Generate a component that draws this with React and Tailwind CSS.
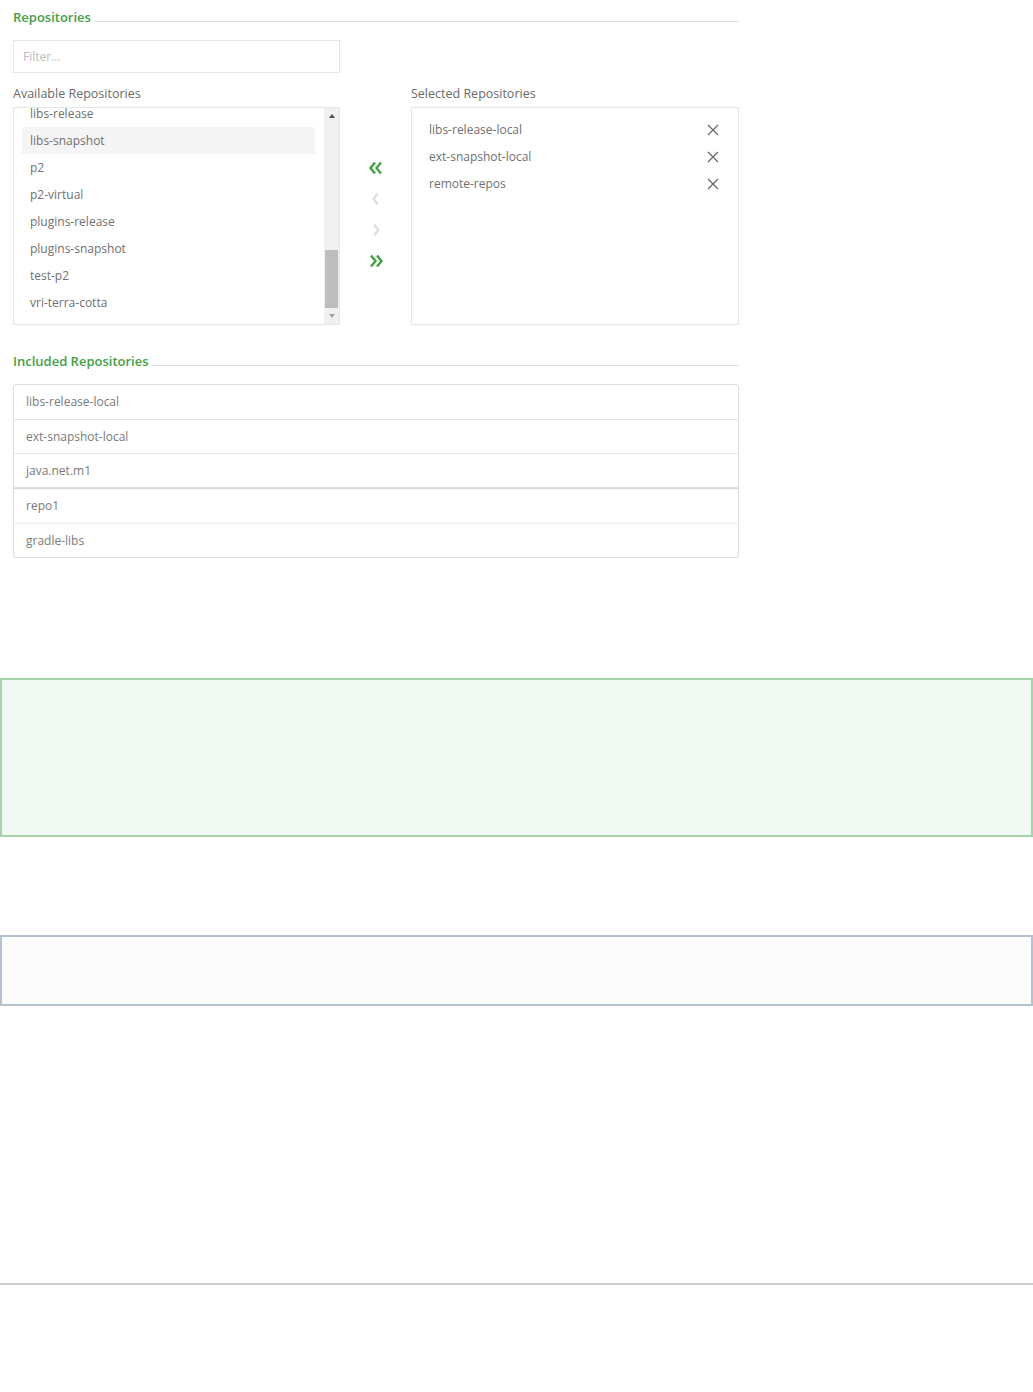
import React from "react";

const available = [
  "libs-release",
  "libs-snapshot",
  "p2",
  "p2-virtual",
  "plugins-release",
  "plugins-snapshot",
  "test-p2",
  "vri-terra-cotta",
];

const selected = ["libs-release-local", "ext-snapshot-local", "remote-repos"];

const includedTop = ["libs-release-local", "ext-snapshot-local", "java.net.m1"];
const includedBottom = ["repo1", "gradle-libs"];

const Legend = ({ children }) => (
  <div className="flex items-center h-[22px]">
    <span className="text-[13px] font-semibold text-[#43a047] leading-[22px] pr-[3px]">
      {children}
    </span>
    <div className="flex-1 h-px bg-[#dcdcdc] mt-[8px]" />
  </div>
);

const Chevron = ({ dir = "left", double = false, color }) => (
  <svg width="18" height="16" viewBox="0 0 18 16" fill="none">
    {dir === "left" ? (
      double ? (
        <>
          <path d="M8 2.5 L3.5 8 L8 13.5" stroke={color} strokeWidth="2.4" />
          <path d="M14 2.5 L9.5 8 L14 13.5" stroke={color} strokeWidth="2.4" />
        </>
      ) : (
        <path d="M11 2.5 L6.5 8 L11 13.5" stroke={color} strokeWidth="2.4" />
      )
    ) : double ? (
      <>
        <path d="M4 2.5 L8.5 8 L4 13.5" stroke={color} strokeWidth="2.4" />
        <path d="M10 2.5 L14.5 8 L10 13.5" stroke={color} strokeWidth="2.4" />
      </>
    ) : (
      <path d="M7 2.5 L11.5 8 L7 13.5" stroke={color} strokeWidth="2.4" />
    )}
  </svg>
);

const CloseIcon = () => (
  <svg width="12" height="12" viewBox="0 0 12 12">
    <path d="M1 1 L11 11 M11 1 L1 11" stroke="#666" strokeWidth="1.2" />
  </svg>
);

export default function App() {
  return (
    <div
      className="bg-white min-h-[1392px] text-[#555]"
      style={{ fontFamily: '"Open Sans", "Liberation Sans", sans-serif' }}
    >
      <div className="w-[739px] pl-[13px] pt-[6px]">
        <Legend>Repositories</Legend>

        <div className="mt-[12px] h-[33px] w-[327px] border border-[#e6e6e6] flex items-center px-[9px] text-[12px] text-[#bbb]">
          Filter...
        </div>

        <div className="flex mt-[12px]">
          <div className="w-[327px]">
            <div className="text-[12.5px] text-[#6a6a6a] h-[22px] leading-[18px]">
              Available Repositories
            </div>
            <div className="h-[218px] border border-[#e6e6e6] flex overflow-hidden">
              <div className="flex-1 overflow-hidden pl-[8px] pr-[9px]">
                <div className="-mt-[8px]">
                  {available.map((name, i) => (
                    <div
                      key={name}
                      className={`h-[27px] flex items-center pl-[8px] text-[12px] text-[#707070] ${
                        i === 1 ? "bg-[#f5f5f5]" : ""
                      }`}
                    >
                      {name}
                    </div>
                  ))}
                </div>
              </div>
              <div className="w-[15px] bg-[#f1f1f1] flex flex-col items-center">
                <div className="h-[16px] flex items-center justify-center">
                  <div className="w-0 h-0 border-l-[3.5px] border-r-[3.5px] border-b-[4px] border-l-transparent border-r-transparent border-b-[#505050]" />
                </div>
                <div className="flex-1 w-full flex flex-col justify-end px-[1px]">
                  <div className="h-[58px] bg-[#bdbdbd]" />
                </div>
                <div className="h-[16px] flex items-center justify-center">
                  <div className="w-0 h-0 border-l-[3.5px] border-r-[3.5px] border-t-[4px] border-l-transparent border-r-transparent border-t-[#a3a3a3]" />
                </div>
              </div>
            </div>
          </div>

          <div className="w-[71px] flex flex-col items-center pt-[75px] gap-[15px]">
            <Chevron dir="left" double color="#43a047" />
            <Chevron dir="left" color="#dedede" />
            <Chevron dir="right" color="#dedede" />
            <Chevron dir="right" double color="#43a047" />
          </div>

          <div className="w-[328px]">
            <div className="text-[12.5px] text-[#6a6a6a] h-[22px] leading-[18px]">
              Selected Repositories
            </div>
            <div className="h-[218px] border border-[#e6e6e6] pt-[8px] pl-[9px] pr-[19px]">
              {selected.map((name) => (
                <div
                  key={name}
                  className="h-[27px] flex items-center justify-between pl-[8px] text-[12px] text-[#707070]"
                >
                  <span>{name}</span>
                  <CloseIcon />
                </div>
              ))}
            </div>
          </div>
        </div>

        <div className="mt-[25px]">
          <Legend>Included Repositories</Legend>
        </div>

        <div className="mt-[12px]">
          <div className="border border-[#dedede] rounded-t-[3px]">
            {includedTop.map((name, i) => (
              <div
                key={name}
                className={`h-[34px] flex items-center pl-[12px] text-[12px] text-[#7a7a7a] ${
                  i > 0 ? "border-t border-[#e2e2e2]" : ""
                }`}
              >
                {name}
              </div>
            ))}
          </div>
          <div className="border border-t-[#d6d6d6] border-[#dedede] rounded-b-[3px]">
            {includedBottom.map((name, i) => (
              <div
                key={name}
                className={`h-[34px] flex items-center pl-[12px] text-[12px] text-[#7a7a7a] ${
                  i > 0 ? "border-t border-[#ececec]" : ""
                }`}
              >
                {name}
              </div>
            ))}
          </div>
        </div>
      </div>

      <div className="mt-[120px] h-[159px] border-2 border-[#a5d4a8] bg-[#f2f8f3]" />

      <div className="mt-[98px] h-[71px] border-2 border-[#b6c1cf] bg-[#fcfcfc]" />

      <div className="mt-[277px] h-[2px] bg-[#cccccc]" />
    </div>
  );
}
